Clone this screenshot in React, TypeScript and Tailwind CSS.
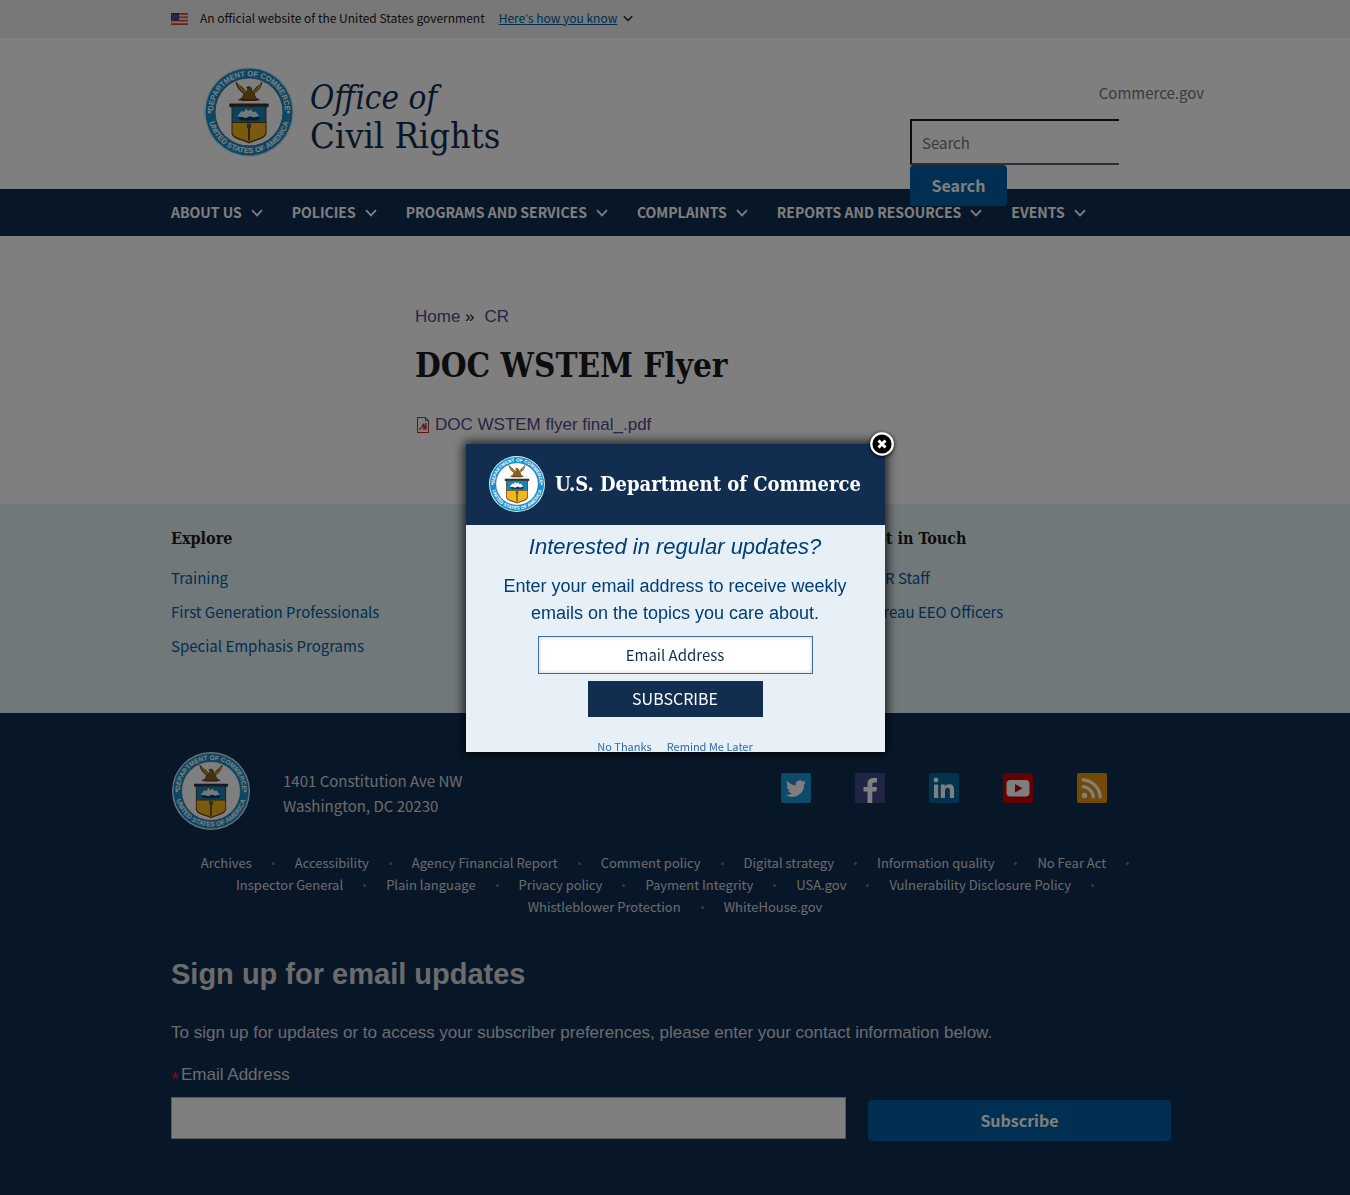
import React, { useId } from "react";

const SANS = "font-['Noto_Sans_CJK_SC','Noto_Sans',sans-serif]";
const SERIF = "font-['DejaVu_Serif_Condensed','DejaVu_Serif',serif]";
const ARIAL = "font-['Liberation_Sans',Arial,sans-serif]";

const navItems = ["ABOUT US", "POLICIES", "PROGRAMS AND SERVICES", "COMPLAINTS", "REPORTS AND RESOURCES", "EVENTS"];

const footerLinks = [
  "Archives",
  "Accessibility",
  "Agency Financial Report",
  "Comment policy",
  "Digital strategy",
  "Information quality",
  "No Fear Act",
  "Inspector General",
  "Plain language",
  "Privacy policy",
  "Payment Integrity",
  "USA.gov",
  "Vulnerability Disclosure Policy",
  "Whistleblower Protection",
  "WhiteHouse.gov",
];

function Chevron({ className }: { className: string }) {
  return (
    <svg viewBox="0 0 12 8" className={className} fill="none" stroke="currentColor" strokeWidth="1.7" aria-hidden="true">
      <path d="M1 1.2 6 6.4 11 1.2" />
    </svg>
  );
}

function Seal({ className }: { className: string }) {
  const id = useId();
  return (
    <svg viewBox="0 0 180 180" className={className} role="img" aria-label="Department of Commerce seal">
      <defs>
        <path id={`${id}t`} d="M18 90a72 72 0 0 1 144 0" />
        <path id={`${id}b`} d="M8 90a82 82 0 0 0 164 0" />
      </defs>
      <circle cx="90" cy="90" r="90" fill="#d9edf7" />
      <circle cx="90" cy="90" r="87" fill="#1b8fc9" />
      <circle cx="90" cy="90" r="68" fill="#fff" stroke="#0e6a9c" strokeWidth="1.5" />
      <g fill="#fff" fontFamily="Liberation Sans, sans-serif" fontWeight="bold" fontSize="15">
        <text textAnchor="middle">
          <textPath href={`#${id}t`} startOffset="50%">DEPARTMENT OF COMMERCE</textPath>
        </text>
        <text textAnchor="middle">
          <textPath href={`#${id}b`} startOffset="50%">UNITED STATES OF AMERICA</textPath>
        </text>
      </g>
      <circle cx="11" cy="90" r="3" fill="#fff" />
      <circle cx="169" cy="90" r="3" fill="#fff" />
      <path
        d="M64 30c2 12 8 18 16 23l-3 8-8 5h42l-8-5-3-8c8-5 14-11 16-23-6 8-12 9-16 17l-4 3-1-8-5-3-5 2 3 3-2 6-4-3c-5-8-12-9-18-17z"
        fill="#8a6416"
        stroke="#4b3408"
        strokeWidth="1.5"
      />
      <path d="M69 34c3 9 8 13 14 17M113 34c-3 9-8 13-14 17" stroke="#d9a62b" strokeWidth="2.5" fill="none" />
      <path d="M76 68h28l4-3H72z" fill="#7f2a1a" />
      <path d="M51 74h78v6l-4 1v52q-2 9-20 14-10 3-15 6-5-3-15-6-18-5-20-14V81l-4-1z" fill="#5b3a12" />
      <path d="M57 80h66v30H57z" fill="#1583bd" />
      <path d="M57 112h66v20q-1 7-18 12-10 3-15 6-5-3-15-6-17-5-18-12z" fill="#f2b71d" />
      <path d="M51 73h78v5H51z" fill="#123a5c" />
      <path d="M67 100h46l-5 7H73z" fill="#123a5c" />
      <path d="M66 99l9-11 5 2 4-7 4 5 6-4 3 6 6-1 7 9-10 3-8-3-8 4-7-2z" fill="#e8f4f8" />
      <path d="M88 116h4v30l-2 2-2-2z" fill="#5b4a12" />
      <path d="M86 113h8v9h-8z" fill="#4d5a60" />
    </svg>
  );
}

function Flag() {
  return (
    <svg viewBox="0 0 17 12" className="h-3 w-[17px]" aria-hidden="true">
      <path d="M0 0h17v12H0z" fill="#f6e3dc" />
      <path d="M0 0h17v1.7H0zM0 3.4h17v1.7H0zM0 6.8h17v1.7H0zM0 10.3h17V12H0z" fill="#d9462e" />
      <path d="M0 0h8v7H0z" fill="#26308f" />
      <path d="M1 1.6h1v1H1zM3.4 1.6h1v1h-1zM5.8 1.6h1v1h-1zM2.2 3.2h1v1h-1zM4.6 3.2h1v1h-1zM1 4.8h1v1H1zM3.4 4.8h1v1h-1zM5.8 4.8h1v1h-1z" fill="#aab4e0" />
    </svg>
  );
}

function PdfIcon() {
  return (
    <svg viewBox="0 0 16 16" className="mr-1 size-4" aria-hidden="true">
      <path d="M2.5.5h8l3 3v12h-11z" fill="#fff" stroke="#555" />
      <path d="M2.5.5v15h11v-6" fill="none" stroke="#c22" />
      <path d="M10.5.5v3h3" fill="none" stroke="#555" />
      <path d="M4 12.5c2-1 4-3 4.500-6 .2 2.500 1 4 3 4.500M9 8v5M11 6v7" fill="none" stroke="#d8262c" strokeWidth="1.4" />
    </svg>
  );
}

const socials = [
  {
    name: "Twitter",
    bg: "#1d95d8",
    art: (
      <path
        fill="#fff"
        d="M25 9.2c-.7.3-1.5.6-2.4.7.9-.5 1.5-1.3 1.8-2.3-.8.5-1.7.8-2.6 1a4.1 4.1 0 0 0-7 3.8c-3.4-.2-6.500-1.8-8.500-4.3-1.1 1.9-.5 4.3 1.3 5.500-.7 0-1.300-.2-1.900-.5 0 2 1.400 3.700 3.300 4.100-.6.2-1.200.2-1.900.1.5 1.600 2 2.800 3.900 2.900A8.300 8.300 0 0 1 5 21.900 11.700 11.700 0 0 0 23 11.500c.8-.6 1.500-1.400 2-2.300z"
      />
    ),
  },
  {
    name: "Facebook",
    bg: "#40498a",
    art: <path fill="#fff" d="M12.500 30V18.500H8.500v-4.500h4v-3.200C12.500 7 15 5 18.500 5H22v4.500h-2.500c-1.700 0-2.200.8-2.200 2.200V14H22l-.7 4.500h-4V30z" />,
  },
  {
    name: "LinkedIn",
    bg: "#00669c",
    art: (
      <g fill="#fff">
        <circle cx="7" cy="7" r="2.4" />
        <path d="M5 11.500h4.200V25H5zM11.800 11.500h4v1.900c.8-1.300 2.300-2.200 4.300-2.200 4.200 0 5 2.700 5 6.300V25h-4.200v-6.700c0-1.600-.1-3.500-2.300-3.500s-2.600 1.600-2.600 3.400V25h-4.200z" />
      </g>
    ),
  },
  {
    name: "YouTube",
    bg: "#c90000",
    art: (
      <g>
        <rect x="3.5" y="7" width="23" height="16.5" rx="4" fill="#fff" />
        <path d="M12 11v8.500l7.500-4.300z" fill="#c90000" />
      </g>
    ),
  },
  {
    name: "RSS",
    bg: "#e8930c",
    art: (
      <g fill="none" stroke="#fff" strokeWidth="3.2">
        <circle cx="7.5" cy="22.5" r="2.7" fill="#fff" stroke="none" />
        <path d="M4.800 13.500a11.700 11.700 0 0 1 11.700 11.700M4.800 6.800a18.400 18.400 0 0 1 18.400 18.400" />
      </g>
    ),
  },
];

export default function App() {
  return (
    <div className={`flex min-h-screen flex-col bg-white text-[#1b1b1b] ${ARIAL}`}>
      <div className={`bg-[#f0f0f0] ${SANS}`}>
        <div className="mx-auto flex h-[38px] max-w-[1008px] items-center text-[12px] leading-4">
          <Flag />
          <p className="ml-3 pb-0.5">An official website of the United States government</p>
          <button type="button" className="ml-3.5 flex items-center gap-1.5 pb-0.5 text-[#005ea2]">
            <span className="underline">
              Here<span className={ARIAL}>’</span>s how you know
            </span>
            <Chevron className="h-[7px] w-[10px] text-[#1b1b1b]" />
          </button>
        </div>
      </div>

      <header className="relative z-10 mx-auto flex h-[151px] w-full max-w-[1008px] justify-between">
        <a href="#home" className="ml-[33px] mt-[29px] flex items-start gap-4 text-[#112e51]">
          <Seal className="size-[90px]" />
          <span className={`mt-3 block leading-[38px] ${SERIF}`}>
            <em className="block text-[33px]">Office of</em>
            <span className="block text-[36px]">Civil Rights</span>
          </span>
        </a>
        <div className={`-mr-[25px] flex w-[294px] flex-col pt-[43px] ${SANS}`}>
          <a href="#commerce" className="self-end text-[15px] leading-6 text-[#71767a]">
            Commerce.gov
          </a>
          <form className="mt-[14px] flex flex-col items-start" onSubmit={(e) => e.preventDefault()}>
            <input
              type="search"
              aria-label="Search"
              placeholder="Search"
              className="block h-[46px] w-[209px] border-b-2 border-l-2 border-t-2 border-[#1b1b1b] border-b-[#565c65] px-2.5 text-[15px] outline-none placeholder:text-[#71767a]"
            />
            <button type="submit" className="block h-[41px] w-[97px] shrink-0 rounded bg-[#005ea2] pb-0.5 text-[16px] font-bold text-white">
              Search
            </button>
          </form>
        </div>
      </header>

      <nav className={`bg-[#112e51] ${SANS}`} aria-label="Primary">
        <ul className="mx-auto flex h-[47px] max-w-[1008px] items-center gap-[29px] text-[14px] font-bold text-white">
          {navItems.map((item) => (
            <li key={item}>
              <button type="button" className="flex items-center gap-[9px] whitespace-nowrap">
                {item}
                <Chevron className="h-2 w-3" />
              </button>
            </li>
          ))}
        </ul>
      </nav>

      <main className="mx-auto h-[268px] w-full max-w-[1008px] pl-[244px] pt-[67px] text-[17px] leading-[27px]">
        <nav aria-label="Breadcrumb">
          <a href="#home" className="text-[#54478c]">Home</a> »
          <a href="#cr" className="ml-2.5 text-[#54478c]">CR</a>
        </nav>
        <h1 className={`mt-[13px] text-[33px] font-bold leading-[46px] ${SERIF}`}>DOC WSTEM Flyer</h1>
        <p className="mt-[22px] flex items-center">
          <PdfIcon />
          <a href="#pdf" className="text-[#54478c]">DOC WSTEM flyer final_.pdf</a>
        </p>
      </main>

      <section className="bg-[#e1f0f5]">
        <div className={`mx-auto grid h-[209px] max-w-[1008px] grid-cols-3 gap-8 pt-[23px] text-[15px] leading-6 text-[#005ea2] ${SANS}`}>
          <div>
            <h2 className={`mb-[15px] text-[16px] font-bold text-[#1b1b1b] ${SERIF}`}>Explore</h2>
            <ul className="flex flex-col gap-[10px]">
              <li><a href="#training">Training</a></li>
              <li><a href="#first">First Generation Professionals</a></li>
              <li><a href="#emphasis">Special Emphasis Programs</a></li>
            </ul>
          </div>
          <div className="col-start-3">
            <h2 className={`mb-[15px] text-[16px] font-bold text-[#1b1b1b] ${SERIF}`}>Get in Touch</h2>
            <ul className="flex flex-col gap-[10px]">
              <li><a href="#staff">OCR Staff</a></li>
              <li><a href="#bureau">Bureau EEO Officers</a></li>
            </ul>
          </div>
        </div>
      </section>

      <footer className="grow bg-[#112e51] pb-12 pt-[39px] text-[#d6d7d9]">
        <div className="mx-auto max-w-[1008px]">
          <div className={`flex items-start ${SANS}`}>
            <Seal className="ml-px size-[78px]" />
            <address className="ml-[33px] mt-4 text-[15px] not-italic leading-[25px]">
              1401 Constitution Ave NW
              <br />
              Washington, DC 20230
            </address>
            <ul className="ml-auto mr-[72px] mt-[21px] flex gap-11">
              {socials.map((s) => (
                <li key={s.name}>
                  <a href={`#${s.name}`} aria-label={s.name} className="block">
                    <svg viewBox="0 0 30 30" className="size-[30px]" aria-hidden="true">
                      <rect width="30" height="30" rx="2" fill={s.bg} />
                      {s.art}
                    </svg>
                  </a>
                </li>
              ))}
            </ul>
          </div>

          <ul className={`mt-[22px] flex flex-wrap justify-center text-[13px] leading-[22px] ${SANS}`}>
            {footerLinks.map((label, i) => (
              <li key={label} className="flex items-center">
                <a href={`#link-${i}`}>{label}</a>
                {i < footerLinks.length - 1 && <span className="mx-5 size-[3px] rounded-full bg-[#4d7ca8]" />}
              </li>
            ))}
          </ul>

          <form onSubmit={(e) => e.preventDefault()} className="text-[17px] leading-6">
            <h2 className="mt-[38px] text-[29px] font-bold leading-9">Sign up for email updates</h2>
            <p className="mt-[29px]">To sign up for updates or to access your subscriber preferences, please enter your contact information below.</p>
            <label htmlFor="signup-email" className="mt-[18px] flex">
              <span className="w-[10px] pt-1 text-[20px] text-[#e31c3d]">*</span>Email Address
            </label>
            <div className="mt-[6px] flex items-start gap-[22px] pr-2">
              <input id="signup-email" type="email" className="h-[42px] min-w-0 grow border border-[#aeb0b5] bg-white px-2 text-[#1b1b1b]" />
              <button type="submit" className={`mt-[3px] h-[41px] w-[303px] rounded bg-[#005ea2] pb-0.5 text-[16px] font-bold text-white ${SANS}`}>
                Subscribe
              </button>
            </div>
          </form>
        </div>
      </footer>

      <div className="fixed inset-0 z-20 flex items-center justify-center bg-black/50">
        <div role="dialog" aria-modal="true" aria-label="Email updates" className="relative">
          <div className="flex h-[308px] w-[419px] flex-col items-center overflow-hidden bg-[#e7eff7] text-center text-[#003e73] shadow-[0_0_10px_2px_rgba(0,0,0,0.8)]">
            <div className="flex h-[81px] w-full shrink-0 items-center justify-center gap-[10px] bg-[#112e51] text-white">
              <Seal className="size-[56px]" />
              <span className={`whitespace-nowrap text-[20px] font-bold ${SERIF}`}>U.S. Department of Commerce</span>
            </div>
            <p className="mt-1 text-[22px] italic leading-9">Interested in regular updates?</p>
            <p className="mt-2 w-[360px] text-[18px] leading-[27px]">
              Enter your email address to receive weekly emails on the topics you care about.
            </p>
            <input
              type="email"
              aria-label="Email Address"
              placeholder="Email Address"
              className={`mt-[9px] h-[38px] w-[275px] shrink-0 border border-[#3a6ea5] bg-white text-center text-[15px] shadow-[inset_0_0_4px_rgba(0,0,0,0.2)] outline-none placeholder:text-[#112e51] ${SANS}`}
            />
            <button type="button" className={`mt-[7px] h-9 w-[175px] shrink-0 bg-[#112e51] pb-0.5 text-[16px] text-white ${SANS}`}>
              SUBSCRIBE
            </button>
            <div className={`mt-5 flex shrink-0 gap-[15px] text-[11px] leading-[18px] text-[#2f6ea3] ${SANS}`}>
              <button type="button">No Thanks</button>
              <button type="button">Remind Me Later</button>
            </div>
          </div>
          <button type="button" aria-label="Close" className="absolute -right-[9px] -top-3 rounded-full shadow-[0_1px_4px_rgba(0,0,0,0.8)]">
            <svg viewBox="0 0 24 24" className="block size-6" aria-hidden="true">
              <circle cx="12" cy="12" r="10.7" fill="#000" stroke="#fff" strokeWidth="2.2" />
              <path d="M8.500 8.500l7 7M15.500 8.500l-7 7" stroke="#fff" strokeWidth="3" />
            </svg>
          </button>
        </div>
      </div>
    </div>
  );
}
